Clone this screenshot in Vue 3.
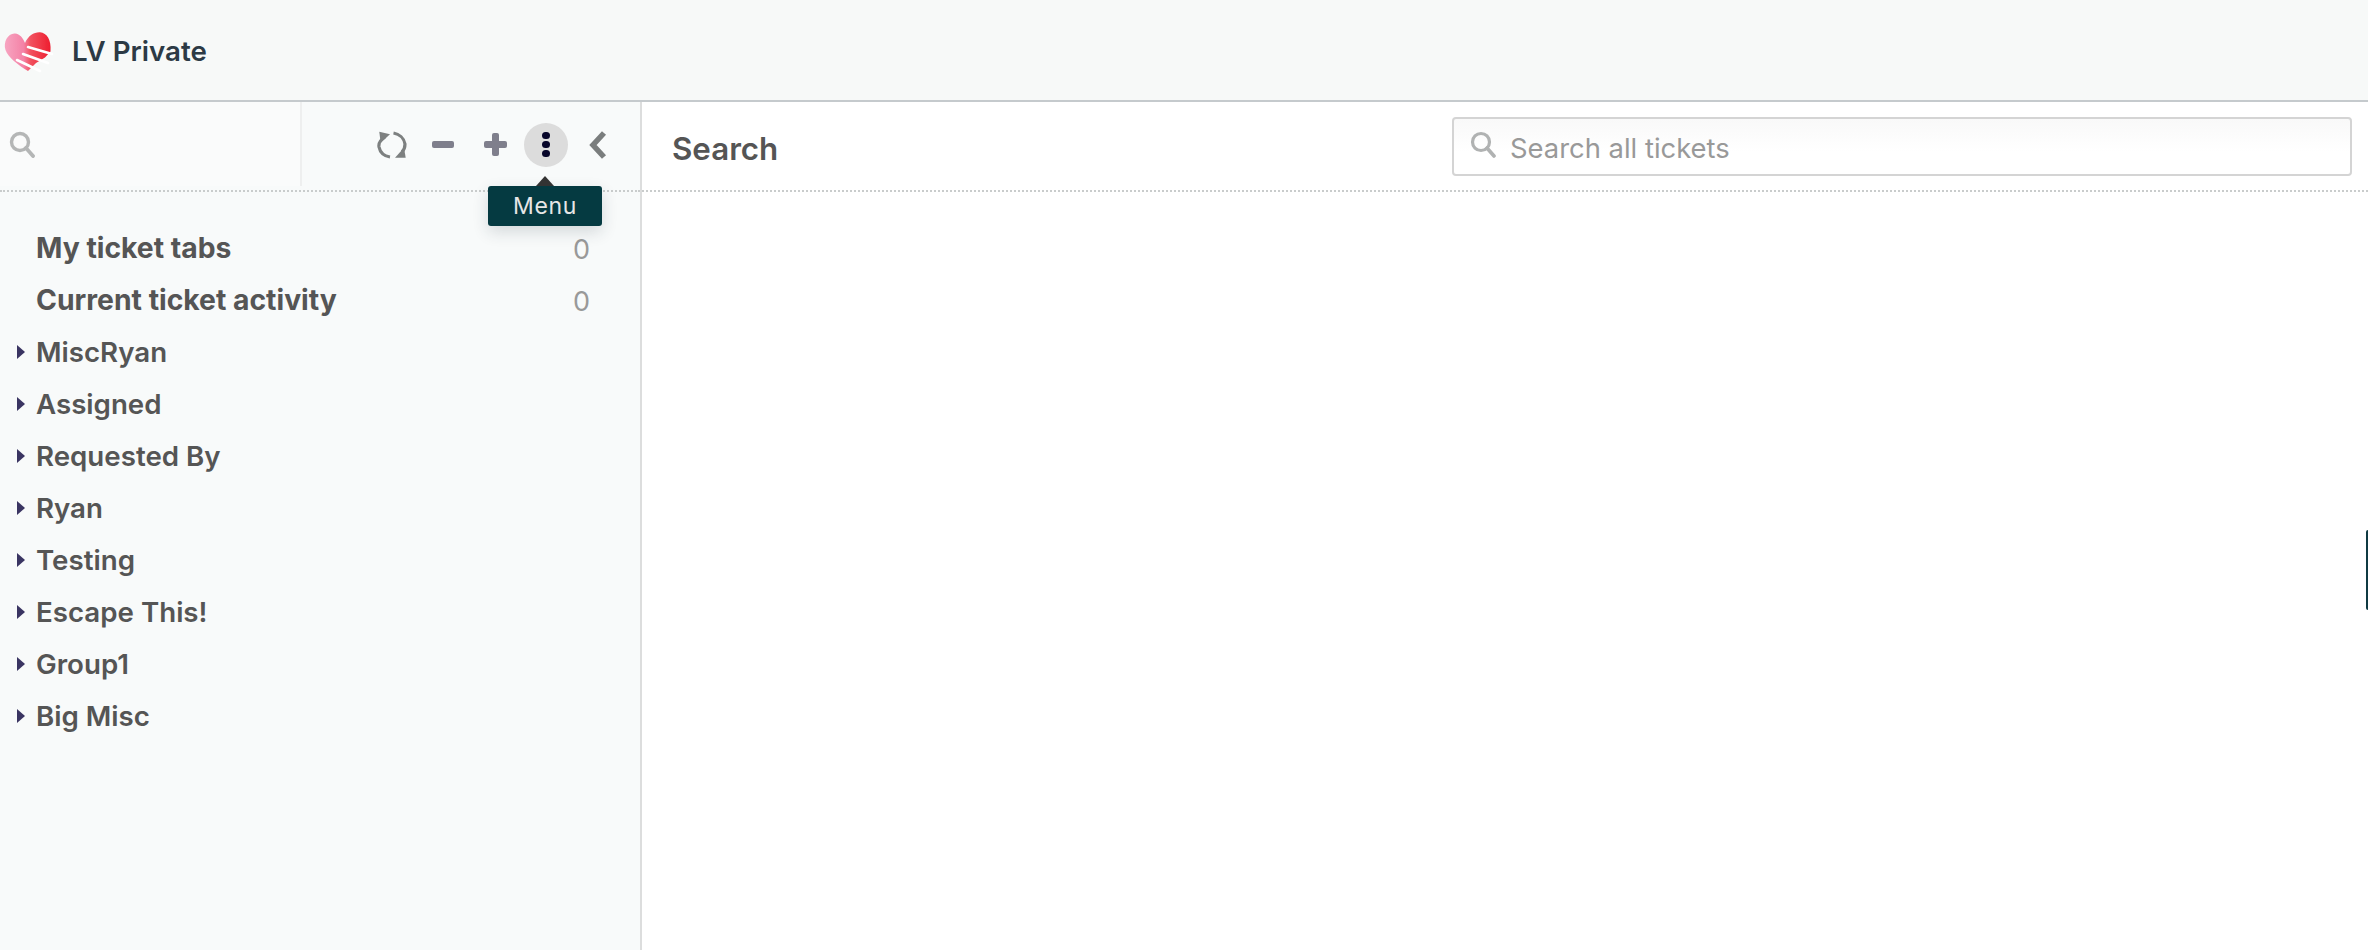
<script setup>
const items = [
  { name: 'My ticket tabs', count: 0, strong: true },
  { name: 'Current ticket activity', count: 0, strong: true },
  { name: 'MiscRyan', caret: true },
  { name: 'Assigned', caret: true },
  { name: 'Requested By', caret: true },
  { name: 'Ryan', caret: true },
  { name: 'Testing', caret: true },
  { name: 'Escape This!', caret: true },
  { name: 'Group1', caret: true },
  { name: 'Big Misc', caret: true },
]
</script>

<template>
  <div class="app">
    <header class="topbar">
      <svg class="logo" width="56" height="50" viewBox="0 25 56 50">
        <defs>
          <linearGradient id="heartGrad" gradientUnits="userSpaceOnUse" x1="4" y1="45" x2="51" y2="45">
            <stop offset="0" stop-color="#f7a6c2" />
            <stop offset="0.42" stop-color="#f482a6" />
            <stop offset="0.56" stop-color="#f1525f" />
            <stop offset="1" stop-color="#ee1c2e" />
          </linearGradient>
          <filter id="soft" x="-10%" y="-10%" width="120%" height="120%"><feGaussianBlur stdDeviation="0.6" /></filter>
        </defs>
        <g filter="url(#soft)">
          <path d="M25 43 C28 36 34 32 40 32.3 C47 33 51.5 40 50.5 51.5 L45 57.5 L36 63 L28 71 C18 65 8 57 5.5 50 C3 42 8 33 15 33.5 C20 34 23 38 25 43 Z" fill="url(#heartGrad)" />
          <path d="M28 47 L52 54" stroke="#fff" stroke-width="2.6" stroke-linecap="round" fill="none" />
          <path d="M23 54 L48 63" stroke="#fff" stroke-width="2.6" stroke-linecap="round" fill="none" />
          <path d="M17 60 L40 71" stroke="#fff" stroke-width="2.6" stroke-linecap="round" fill="none" />
        </g>
      </svg>
      <span class="brand">LV Private</span>
    </header>

    <div class="body">
      <aside class="sidebar">
        <div class="toolbar">
          <div class="filter">
            <svg class="glass" width="28" height="28" viewBox="0 0 28 28">
              <circle cx="11" cy="11" r="8.5" fill="none" stroke="#b4b6b6" stroke-width="3.4" />
              <path d="M17 17 L24 25" stroke="#b4b6b6" stroke-width="3.8" stroke-linecap="round" />
            </svg>
          </div>
          <div class="tools">
            <svg class="refresh" width="30" height="28" viewBox="0 0 30 28">
              <path d="M8 6 C3 9 1.5 13 2 16 C3 21 7 25 13 26" fill="none" stroke="#7d8080" stroke-width="3.2" />
              <path d="M2.3 0.7 L13 3.3 L3.7 11.7 Z" fill="#7d8080" />
              <path d="M16.5 2 C22 3 27 7 28 13 C28 16 27 19 25 21" fill="none" stroke="#7d8080" stroke-width="3.2" />
              <path d="M18 26.7 L28.7 26.7 L27 16.7 Z" fill="#7d8080" />
            </svg>
            <span class="minus"></span>
            <span class="plus"></span>
            <span class="kebab"><i></i><i></i><i></i></span>
            <svg class="chev" width="20" height="30" viewBox="0 0 20 30">
              <path d="M16 3 L5 15 L16 27" fill="none" stroke="#7a7d7d" stroke-width="5.5" stroke-linejoin="miter" />
            </svg>
          </div>
          <div class="tooltip">Menu</div>
        </div>

        <ul class="list">
          <li v-for="item in items" :key="item.name" class="row" :class="{ strong: item.strong }">
            <span class="gutter"><span v-if="item.caret" class="caret"></span></span>
            <span class="name">{{ item.name }}</span>
            <span v-if="item.count !== undefined" class="count">{{ item.count }}</span>
          </li>
        </ul>
      </aside>

      <main class="main">
        <div class="main-head">
          <h1 class="title">Search</h1>
          <label class="searchbox">
            <svg class="box-glass" width="28" height="28" viewBox="0 0 28 28">
              <circle cx="11" cy="11" r="8.5" fill="none" stroke="#b0b2b2" stroke-width="3.2" />
              <path d="M17 17 L24 25" stroke="#b0b2b2" stroke-width="3.6" stroke-linecap="round" />
            </svg>
            <span class="placeholder">Search all tickets</span>
          </label>
        </div>
      </main>
    </div>
    <span class="edge"></span>
  </div>
</template>

<style scoped>
.app {
  position: relative;
  width: 2368px;
  height: 950px;
  overflow: hidden;
  display: flex;
  flex-direction: column;
  background: #fff;
  font-family: Inter, "Liberation Sans", sans-serif;
}
.topbar {
  height: 100px;
  flex: none;
  display: flex;
  align-items: center;
  background: #f7f9f8;
  border-bottom: 2px solid #c5cacd;
}
.logo {
  flex: none;
}
.brand {
  margin-left: 16px;
  font-size: 27.7px;
  font-weight: 600;
  color: #2c3a45;
  position: relative;
  top: 1px;
}
.body {
  flex: 1;
  display: flex;
  min-height: 0;
}
.sidebar {
  width: 640px;
  flex: none;
  background: #f8fafa;
  border-right: 2px solid #dcdddd;
}
.toolbar {
  position: relative;
  height: 88px;
  display: flex;
  border-bottom: 2px dotted #c9cccc;
  box-sizing: content-box;
}
.filter {
  width: 302px;
  height: 84px;
  flex: none;
  background: #fafbfb;
  border-right: 2px solid #eeefef;
  display: flex;
  align-items: center;
  padding-left: 9px;
  box-sizing: border-box;
}
.glass {
  margin-top: 2px;
  filter: blur(0.4px);
}
.tools {
  flex: 1;
  display: flex;
  align-items: center;
  padding: 0 0 3px 75px;
}
.refresh {
  flex: none;
}
.minus {
  display: block;
  width: 22px;
  height: 7px;
  margin-left: 25px;
  background: #7f7f8c;
  border-radius: 2px;
}
.plus {
  position: relative;
  display: block;
  width: 23px;
  height: 23px;
  margin-left: 30px;
}
.plus::before,
.plus::after {
  content: "";
  position: absolute;
  background: #7f7f8c;
  border-radius: 2px;
}
.plus::before {
  left: 0;
  right: 0;
  top: 8px;
  height: 7px;
}
.plus::after {
  top: 0;
  bottom: 0;
  left: 8px;
  width: 7px;
}
.kebab {
  width: 44px;
  height: 44px;
  margin-left: 17px;
  border-radius: 50%;
  background: #dcdcdc;
  display: flex;
  flex-direction: column;
  align-items: center;
  justify-content: center;
  gap: 1.6px;
}
.kebab i {
  display: block;
  width: 7.4px;
  height: 7.4px;
  border-radius: 50%;
  background: #07062a;
}
.chev {
  margin-left: 20px;
}
.tooltip {
  position: absolute;
  left: 488px;
  top: 84px;
  width: 114px;
  height: 40px;
  background: #053a41;
  border-radius: 3px;
  color: #e6e6e6;
  font-size: 23px;
  letter-spacing: 0.6px;
  line-height: 40px;
  text-align: center;
  box-shadow: 0 6px 16px rgba(30, 50, 60, 0.16);
  z-index: 2;
}
.tooltip::before {
  content: "";
  position: absolute;
  left: 48px;
  top: -10px;
  border-left: 9px solid transparent;
  border-right: 9px solid transparent;
  border-bottom: 10px solid #333;
}
.list {
  list-style: none;
  margin: 0;
  padding: 30px 50px 0 0;
}
.row {
  height: 52px;
  display: flex;
  align-items: center;
  color: #555;
  font-size: 27.7px;
  font-weight: 600;
}
.row.strong {
  font-weight: 700;
  font-size: 28.3px;
}
.gutter {
  width: 36px;
  flex: none;
  display: flex;
  padding-left: 17px;
  box-sizing: border-box;
}
.caret {
  border-left: 8px solid #3a3562;
  border-top: 7px solid transparent;
  border-bottom: 7px solid transparent;
}
.name {
  flex: 1;
}
.count {
  color: #999;
  font-weight: 400;
  font-size: 27px;
  margin-top: 2px;
}
.main {
  flex: 1;
  min-width: 0;
}
.main-head {
  height: 88px;
  border-bottom: 2px dotted #c9cccc;
  display: flex;
  align-items: center;
  justify-content: space-between;
  padding: 0 16px 0 30px;
  box-sizing: content-box;
}
.title {
  margin: 6px 0 0;
  font-size: 31.3px;
  font-weight: 600;
  color: #555;
}
.searchbox {
  width: 900px;
  height: 59px;
  box-sizing: border-box;
  margin-top: 1px;
  border: 2px solid #d4d4d4;
  border-radius: 4px;
  background: linear-gradient(#f9f9f9, #fff 60%);
  display: flex;
  align-items: center;
  padding-left: 16px;
}
.box-glass {
  filter: blur(0.4px);
  margin-top: -4px;
}
.placeholder {
  margin-left: 12px;
  font-size: 27.4px;
  color: #999;
  position: relative;
  top: 1px;
}
.edge {
  position: absolute;
  right: 0;
  top: 530px;
  width: 2px;
  height: 80px;
  background: #0f3a42;
  border-radius: 2px 0 0 2px;
}
</style>
